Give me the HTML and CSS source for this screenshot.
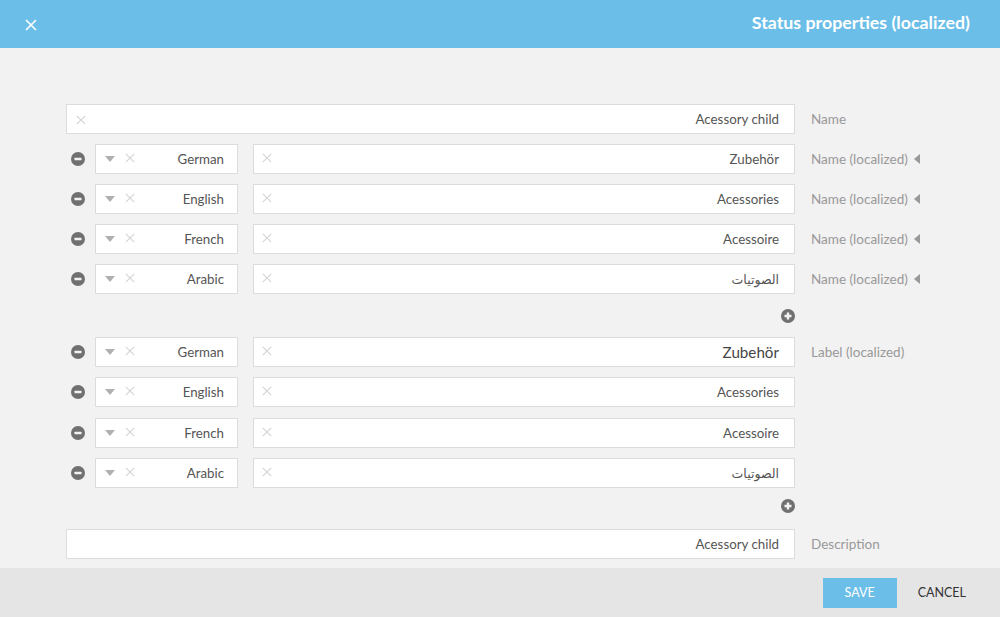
FILE: index.html
```html
<!DOCTYPE html>
<html lang="en">
<head>
<meta charset="utf-8">
<title>Status properties (localized)</title>
<link rel="stylesheet" href="styles.css">
<svg class="defs" width="0" height="0" aria-hidden="true">
  <symbol id="x" viewBox="0 0 9 9"><path d="M.7.7l7.6 7.6M8.3.7L.7 8.3" fill="none" stroke="currentColor" stroke-width="1"/></symbol>
  <symbol id="minus" viewBox="0 0 14 14"><circle cx="7" cy="7" r="7" fill="currentColor"/><rect x="3.5" y="5.7" width="7" height="2.6" rx=".6" fill="#f2f2f2"/></symbol>
  <symbol id="plus" viewBox="0 0 14 14"><circle cx="7" cy="7" r="7" fill="currentColor"/><path d="M3.5 7h7M7 3.5v7" stroke="#f2f2f2" stroke-width="2.4" fill="none"/></symbol>
</svg>
</head>
<body>
<header class="top">
  <svg class="close" viewBox="0 0 12 12"><path d="M1 1l10 10M11 1L1 11" fill="none" stroke="currentColor" stroke-width="1.6"/></svg>
  <h1 class="title">Status properties (localized)</h1>
</header>
<main class="form">
  <div class="row row-name">
    <div class="field wide"><svg class="clear"><use href="#x"/></svg><span class="value">Acessory child</span></div>
    <span class="label">Name</span>
  </div>

  <div class="row"><svg class="btn"><use href="#minus"/></svg>
    <div class="field lang"><i class="caret"></i><svg class="clear"><use href="#x"/></svg><span class="value">German</span></div>
    <div class="field text"><svg class="clear"><use href="#x"/></svg><span class="value">Zubehör</span></div>
    <span class="label">Name (localized)<i class="tri"></i></span></div>
  <div class="row"><svg class="btn"><use href="#minus"/></svg>
    <div class="field lang"><i class="caret"></i><svg class="clear"><use href="#x"/></svg><span class="value">English</span></div>
    <div class="field text"><svg class="clear"><use href="#x"/></svg><span class="value">Acessories</span></div>
    <span class="label">Name (localized)<i class="tri"></i></span></div>
  <div class="row"><svg class="btn"><use href="#minus"/></svg>
    <div class="field lang"><i class="caret"></i><svg class="clear"><use href="#x"/></svg><span class="value">French</span></div>
    <div class="field text"><svg class="clear"><use href="#x"/></svg><span class="value">Acessoire</span></div>
    <span class="label">Name (localized)<i class="tri"></i></span></div>
  <div class="row"><svg class="btn"><use href="#minus"/></svg>
    <div class="field lang"><i class="caret"></i><svg class="clear"><use href="#x"/></svg><span class="value">Arabic</span></div>
    <div class="field text"><svg class="clear"><use href="#x"/></svg><span class="value arabic">الصوتيات</span></div>
    <span class="label">Name (localized)<i class="tri"></i></span></div>
  <div class="add add-first"><svg class="btn"><use href="#plus"/></svg></div>

  <div class="row"><svg class="btn"><use href="#minus"/></svg>
    <div class="field lang"><i class="caret"></i><svg class="clear"><use href="#x"/></svg><span class="value">German</span></div>
    <div class="field text"><svg class="clear"><use href="#x"/></svg><span class="value large">Zubehör</span></div>
    <span class="label">Label (localized)</span></div>
  <div class="row"><svg class="btn"><use href="#minus"/></svg>
    <div class="field lang"><i class="caret"></i><svg class="clear"><use href="#x"/></svg><span class="value">English</span></div>
    <div class="field text"><svg class="clear"><use href="#x"/></svg><span class="value">Acessories</span></div></div>
  <div class="row row-loose"><svg class="btn"><use href="#minus"/></svg>
    <div class="field lang"><i class="caret"></i><svg class="clear"><use href="#x"/></svg><span class="value">French</span></div>
    <div class="field text"><svg class="clear"><use href="#x"/></svg><span class="value">Acessoire</span></div></div>
  <div class="row"><svg class="btn"><use href="#minus"/></svg>
    <div class="field lang"><i class="caret"></i><svg class="clear"><use href="#x"/></svg><span class="value">Arabic</span></div>
    <div class="field text"><svg class="clear"><use href="#x"/></svg><span class="value arabic">الصوتيات</span></div></div>
  <div class="add add-second"><svg class="btn"><use href="#plus"/></svg></div>

  <div class="row row-name">
    <div class="field wide"><span class="value">Acessory child</span></div>
    <span class="label">Description</span>
  </div>
</main>
<footer class="bottom">
  <button class="save" type="button">SAVE</button>
  <button class="cancel" type="button">CANCEL</button>
</footer>
</body>
</html>
```
FILE: styles.css
```css
* { box-sizing: border-box; }
html, body { height: 100%; }
body {
  margin: 0;
  display: flex;
  flex-direction: column;
  height: 617px;
  overflow: hidden;
  background: #f2f2f2;
  color: #555;
  font-family: "Lato", "DejaVu Sans", sans-serif;
  font-size: 13.3px;
}
.defs { position: absolute; }
.top {
  flex: 0 0 48px;
  display: flex;
  align-items: center;
  justify-content: space-between;
  padding: 0 30px 0 25px;
  background: #6bbee8;
  color: #fff;
}
.close { width: 12px; height: 12px; margin-top: 2px; }
.title { margin: 0 0 4px; font-size: 17.8px; font-weight: 700; color: #fff; }
.form {
  flex: 1;
  min-height: 0;
  padding: 56px 0 0 66px;
}
.row {
  display: flex;
  align-items: center;
  height: 30px;
  margin-bottom: 10px;
}
.row-loose { margin-top: 11px; }
.field {
  position: relative;
  display: flex;
  align-items: center;
  justify-content: flex-end;
  height: 30px;
  padding-right: 15px;
  background: #fff;
  border: 1px solid #dcdcdc;
}
.wide { width: 729px; }
.lang { width: 143px; margin-right: 15px; padding-right: 13px; }
.text { width: 542px; }
.clear {
  position: absolute;
  left: 8px;
  top: 8px;
  width: 10px;
  height: 10px;
  color: #d4d4d4;
}
.wide .clear { left: 9px; top: 10px; }
.lang .clear { left: 29px; }
.caret {
  position: absolute;
  left: 9px;
  top: 11px;
  border-style: solid;
  border-width: 6px 5px 0;
  border-color: #b0b0b0 transparent transparent;
}
.value { color: #555; }
.large { font-size: 15.2px; color: #444; }
.arabic { font-size: 12.5px; }
.btn {
  flex: none;
  width: 14px;
  height: 14px;
  margin: 0 10px 0 5px;
  color: #707070;
}
.label {
  margin-left: 16px;
  color: #999;
  font-size: 13.5px;
  display: flex;
  align-items: center;
}
.tri {
  margin-left: 6px;
  border-style: solid;
  border-width: 5px 6px 5px 0;
  border-color: transparent #999 transparent transparent;
}
.add {
  width: 729px;
  height: 14px;
  display: flex;
  justify-content: flex-end;
}
.add .btn { margin: 0; }
.add-first { margin: 15px 0 14px; }
.add-second { margin: 11px 0 16px; }
.bottom {
  flex: 0 0 49px;
  display: flex;
  align-items: center;
  justify-content: flex-end;
  padding: 0 34px 0 0;
  background: #e5e5e5;
}
button {
  font: inherit;
  font-size: 12.5px;
  border: 0;
  padding: 0;
  background: none;
}
.save {
  width: 74px;
  height: 30px;
  background: #6bbee8;
  color: #fff;
}
.cancel { margin-left: 21px; color: #333; }
```
